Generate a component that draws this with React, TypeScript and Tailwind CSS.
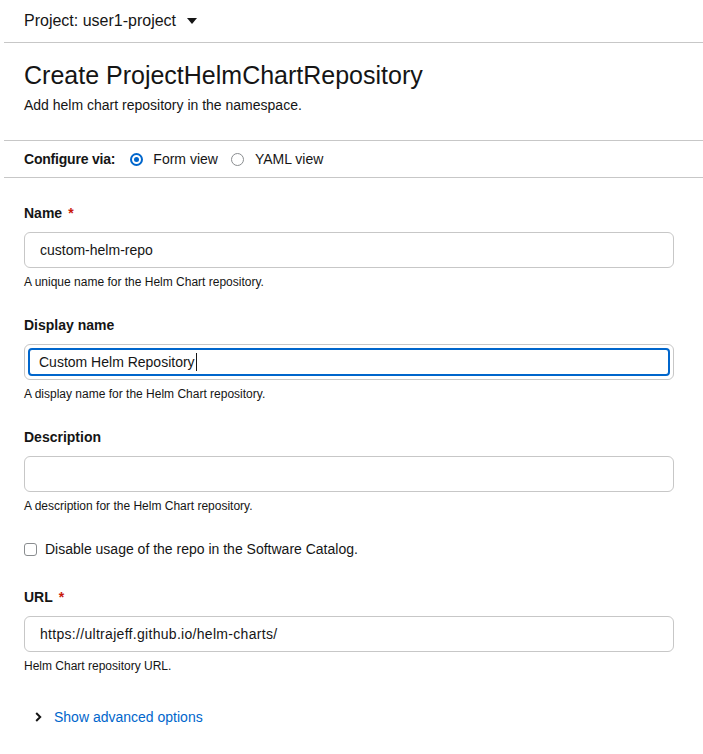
import React from 'react';

const font = { fontFamily: '"Liberation Sans", Arial, sans-serif' };

const Required = () => <span className="ml-[6px] text-[#c9190b]">*</span>;

const Label: React.FC<{ text: string; required?: boolean }> = ({ text, required }) => (
  <div className="h-[21px] text-[14px] leading-[21px] font-bold text-[#151515]">
    {text}
    {required && <Required />}
  </div>
);

const Helper: React.FC<{ text: string }> = ({ text }) => (
  <div className="mt-[5px] h-[18px] text-[12px] leading-[18px] text-[#151515]">{text}</div>
);

const TextField: React.FC<{ value: string; wide?: boolean }> = ({ value, wide }) => (
  <div
    className={`mt-2 flex h-9 w-[650px] items-center rounded-md border border-[#c7c7c7] bg-white pl-[15px] text-[14px] text-[#151515] ${wide ? 'tracking-[0.3px]' : ''}`}
  >
    {value}
  </div>
);

const App: React.FC = () => {
  return (
    <div className="min-h-[754px] w-[703px] bg-white text-[#151515]" style={font}>
      {/* Project bar */}
      <div className="ml-1 flex h-[43px] items-center border-b border-[#c7c7c7] pl-5">
        <span className="text-[16px]">Project: user1-project</span>
        <svg className="ml-[11px]" width="10" height="6" viewBox="0 0 10 6">
          <path d="M0 0h10L5 6z" fill="#151515" />
        </svg>
      </div>

      {/* Heading */}
      <div className="ml-1 h-[98px] border-b border-[#c7c7c7] pl-5 pt-[17px]">
        <h1 className="text-[25px] leading-[30px] text-[#151515]">Create ProjectHelmChartRepository</h1>
        <p className="mt-[5px] text-[14px] leading-[21px]">Add helm chart repository in the namespace.</p>
      </div>

      {/* Configure via */}
      <div className="ml-1 flex h-[37px] items-center border-b border-[#c7c7c7] pl-5 text-[14px]">
        <span className="font-bold tracking-[-0.2px]">Configure via:</span>
        <span className="ml-[15px] flex h-[13px] w-[13px] items-center justify-center rounded-full border-2 border-[#0066cc]">
          <span className="h-[5px] w-[5px] rounded-full bg-[#0066cc]" />
        </span>
        <span className="ml-[10px]">Form view</span>
        <span className="ml-[13px] h-[13px] w-[13px] rounded-full border border-[#8a8d90]" />
        <span className="ml-[11px]">YAML view</span>
      </div>

      {/* Form */}
      <div className="flex flex-col gap-6 pl-6 pt-[25px]">
        <div>
          <Label text="Name" required />
          <TextField value="custom-helm-repo" />
          <Helper text="A unique name for the Helm Chart repository." />
        </div>

        <div>
          <Label text="Display name" />
          <div className="mt-2 h-9 w-[650px] rounded-md border border-[#c7c7c7] bg-white p-[3px]">
            <div className="flex h-full items-center rounded-[4px] border-2 border-[#0066cc] pl-[9px] text-[14px]">
              Custom Helm Repository
              <span className="ml-px h-[18px] w-px bg-[#151515]" />
            </div>
          </div>
          <Helper text="A display name for the Helm Chart repository." />
        </div>

        <div>
          <Label text="Description" />
          <TextField value="" />
          <Helper text="A description for the Helm Chart repository." />
        </div>

        <div className="flex h-5 items-center text-[14px]">
          <span className="h-[13px] w-[13px] rounded-[3px] border border-[#8a8d90]" />
          <span className="ml-[8px]">Disable usage of the repo in the Software Catalog.</span>
        </div>

        <div className="mt-1">
          <Label text="URL" required />
          <TextField value="https://ultrajeff.github.io/helm-charts/" wide />
          <Helper text="Helm Chart repository URL." />
        </div>

        <div className="flex h-9 items-center pl-[11px] text-[14px] text-[#0066cc]">
          <svg width="7" height="10" viewBox="0 0 7 10">
            <path d="M1.2 1l4 4-4 4" fill="none" stroke="#151515" strokeWidth="2" />
          </svg>
          <span className="ml-[12px]">Show advanced options</span>
        </div>
      </div>
    </div>
  );
};

export default App;
